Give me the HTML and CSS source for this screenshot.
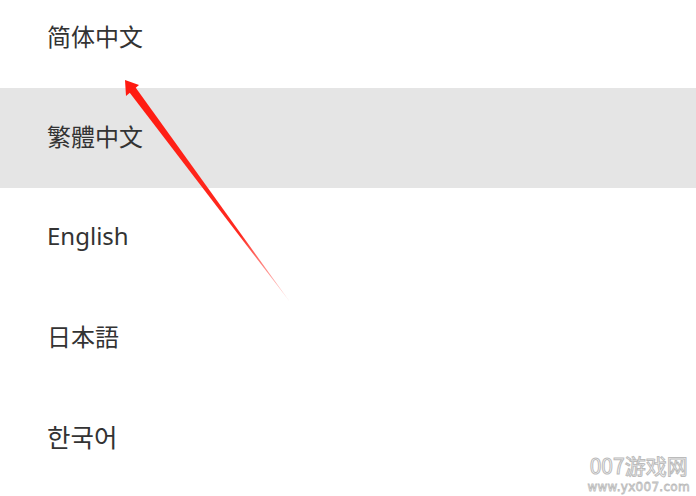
FILE: index.html
```html
<!DOCTYPE html>
<html lang="zh-CN">
<head>
    <meta charset="UTF-8">
    <title>Language</title>
    <link rel="stylesheet" href="styles.css">
</head>
<body>

    <ul class="lang-list">
        <li class="lang-item" lang="zh-CN">简体中文</li>
        <li class="lang-item active" lang="zh-TW">繁體中文</li>
        <li class="lang-item" lang="en">English</li>
        <li class="lang-item" lang="ja">日本語</li>
        <li class="lang-item" lang="ko">한국어</li>
    </ul>

    <!-- annotation arrow -->
    <svg class="arrow" width="696" height="496" viewBox="0 0 696 496">
        <defs>
            <linearGradient id="fade" x1="125" y1="80" x2="290" y2="302" gradientUnits="userSpaceOnUse">
                <stop offset="0" stop-color="#ff1a10"/>
                <stop offset="0.7" stop-color="#ff2a20"/>
                <stop offset="1" stop-color="#ff6b66" stop-opacity="0.3"/>
            </linearGradient>
        </defs>
        <polygon points="128,90.5 134.5,86 290,302" fill="url(#fade)"/>
        <polygon points="125,80 139,85 126,96" fill="#ff1a10"/>
    </svg>

    <div class="watermark">
        <div class="wm-title">007游戏网</div>
        <div class="wm-url">www.yx007.com</div>
    </div>

</body>
</html>
```

FILE: styles.css
```css
body {
    margin: 0;
    background-color: #fff;
    font-family: "Noto Sans", "Noto Sans CJK SC", sans-serif;
    overflow: hidden;
}

.lang-list {
    list-style: none;
    margin: -12px 0 0;
    padding: 0;
}

.lang-item {
    height: 100px;
    box-sizing: border-box;
    display: flex;
    align-items: center;
    padding: 0 0 5px 47px;
    font-size: 24px;
    color: #333;
}

.lang-item:lang(zh-CN) { font-family: "Noto Sans CJK SC", sans-serif; }
.lang-item:lang(zh-TW) { font-family: "Noto Sans CJK TC", sans-serif; }
.lang-item:lang(ja) { font-family: "Noto Sans CJK JP", sans-serif; }
.lang-item:lang(ko) {
    font-family: "Noto Sans CJK KR", sans-serif;
    font-size: 25.5px;
}

.lang-item.active {
    background-color: #e5e5e5;
}

.arrow {
    position: absolute;
    top: 0;
    left: 0;
    pointer-events: none;
}

.watermark {
    position: absolute;
    right: 6px;
    bottom: 2px;
    text-align: center;
    color: transparent;
    -webkit-text-stroke: 1px #bbb;
}

.wm-title {
    font-family: "Noto Sans CJK SC", sans-serif;
    font-size: 21px;
    line-height: 30px;
}

.wm-url {
    font-family: "DejaVu Sans", sans-serif;
    font-size: 12px;
    line-height: 14px;
    letter-spacing: 0.3px;
    -webkit-text-stroke: 0.8px #bbb;
}
```
